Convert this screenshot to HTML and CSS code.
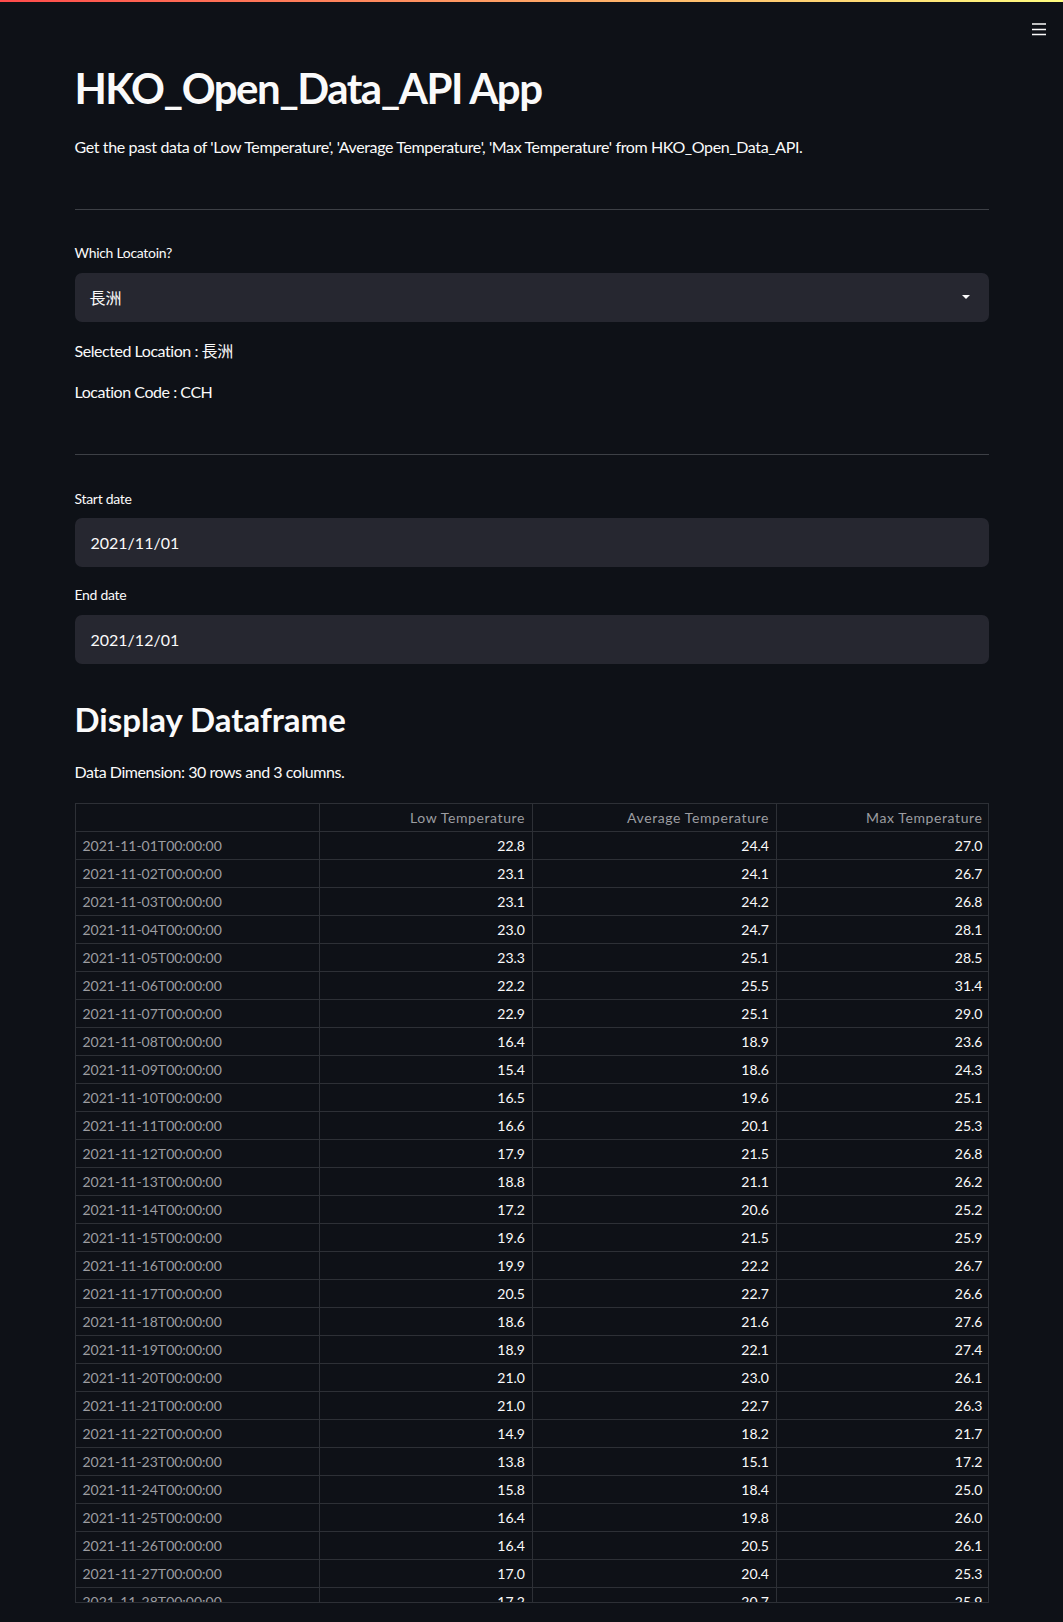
FILE: index.html
```html
<!DOCTYPE html>
<html lang="en">
<head>
<meta charset="utf-8">
<title>HKO_Open_Data_API App</title>
<link rel="stylesheet" href="styles.css">
</head>
<body>
<header class="app-header">
  <div class="decoration"></div>
  <button class="menu-btn" aria-label="menu">
    <svg width="14" height="14" viewBox="0 0 14 14"><path d="M0 2h14M0 7.5h14M0 12.5h14" stroke="#fafafa" stroke-width="1.6" fill="none"/></svg>
  </button>
</header>
<main class="main">
  <h1 class="title">HKO_Open_Data_API App</h1>
  <p class="intro">Get the past data of 'Low Temperature', 'Average Temperature', 'Max Temperature' from HKO_Open_Data_API.</p>
  <hr class="divider divider-1">
  <label class="label label-loc">Which Locatoin?</label>
  <div class="select">
    <span class="select-value">長洲</span>
    <svg class="caret" width="10" height="6" viewBox="0 0 10 6"><path d="M1 1h8L5 5z" fill="#fafafa"/></svg>
  </div>
  <p class="info info-sel">Selected Location : 長洲</p>
  <p class="info info-code">Location Code : CCH</p>
  <hr class="divider divider-2">
  <label class="label label-start">Start date</label>
  <div class="input">2021/11/01</div>
  <label class="label label-end">End date</label>
  <div class="input">2021/12/01</div>
  <h2 class="subtitle">Display Dataframe</h2>
  <p class="dim">Data Dimension: 30 rows and 3 columns.</p>
  <div class="grid-wrap">
    <table class="grid">
      <colgroup><col class="c-idx"><col class="c-a"><col class="c-b"><col class="c-c"></colgroup>
      <thead><tr><th></th><th>Low Temperature</th><th>Average Temperature</th><th>Max Temperature</th></tr></thead>
      <tbody>
        <tr><td>2021-11-01T00:00:00</td><td>22.8</td><td>24.4</td><td>27.0</td></tr>
        <tr><td>2021-11-02T00:00:00</td><td>23.1</td><td>24.1</td><td>26.7</td></tr>
        <tr><td>2021-11-03T00:00:00</td><td>23.1</td><td>24.2</td><td>26.8</td></tr>
        <tr><td>2021-11-04T00:00:00</td><td>23.0</td><td>24.7</td><td>28.1</td></tr>
        <tr><td>2021-11-05T00:00:00</td><td>23.3</td><td>25.1</td><td>28.5</td></tr>
        <tr><td>2021-11-06T00:00:00</td><td>22.2</td><td>25.5</td><td>31.4</td></tr>
        <tr><td>2021-11-07T00:00:00</td><td>22.9</td><td>25.1</td><td>29.0</td></tr>
        <tr><td>2021-11-08T00:00:00</td><td>16.4</td><td>18.9</td><td>23.6</td></tr>
        <tr><td>2021-11-09T00:00:00</td><td>15.4</td><td>18.6</td><td>24.3</td></tr>
        <tr><td>2021-11-10T00:00:00</td><td>16.5</td><td>19.6</td><td>25.1</td></tr>
        <tr><td>2021-11-11T00:00:00</td><td>16.6</td><td>20.1</td><td>25.3</td></tr>
        <tr><td>2021-11-12T00:00:00</td><td>17.9</td><td>21.5</td><td>26.8</td></tr>
        <tr><td>2021-11-13T00:00:00</td><td>18.8</td><td>21.1</td><td>26.2</td></tr>
        <tr><td>2021-11-14T00:00:00</td><td>17.2</td><td>20.6</td><td>25.2</td></tr>
        <tr><td>2021-11-15T00:00:00</td><td>19.6</td><td>21.5</td><td>25.9</td></tr>
        <tr><td>2021-11-16T00:00:00</td><td>19.9</td><td>22.2</td><td>26.7</td></tr>
        <tr><td>2021-11-17T00:00:00</td><td>20.5</td><td>22.7</td><td>26.6</td></tr>
        <tr><td>2021-11-18T00:00:00</td><td>18.6</td><td>21.6</td><td>27.6</td></tr>
        <tr><td>2021-11-19T00:00:00</td><td>18.9</td><td>22.1</td><td>27.4</td></tr>
        <tr><td>2021-11-20T00:00:00</td><td>21.0</td><td>23.0</td><td>26.1</td></tr>
        <tr><td>2021-11-21T00:00:00</td><td>21.0</td><td>22.7</td><td>26.3</td></tr>
        <tr><td>2021-11-22T00:00:00</td><td>14.9</td><td>18.2</td><td>21.7</td></tr>
        <tr><td>2021-11-23T00:00:00</td><td>13.8</td><td>15.1</td><td>17.2</td></tr>
        <tr><td>2021-11-24T00:00:00</td><td>15.8</td><td>18.4</td><td>25.0</td></tr>
        <tr><td>2021-11-25T00:00:00</td><td>16.4</td><td>19.8</td><td>26.0</td></tr>
        <tr><td>2021-11-26T00:00:00</td><td>16.4</td><td>20.5</td><td>26.1</td></tr>
        <tr><td>2021-11-27T00:00:00</td><td>17.0</td><td>20.4</td><td>25.3</td></tr>
        <tr><td>2021-11-28T00:00:00</td><td>17.2</td><td>20.7</td><td>25.9</td></tr>
      </tbody>
    </table>
  </div>
</main>
</body>
</html>
```

FILE: styles.css
```css
html, body {
  margin: 0;
  padding: 0;
  background: #0e1117;
  color: #fafafa;
  font-family: Lato, "Noto Sans CJK TC", sans-serif;
}

.app-header {
  position: fixed;
  top: 0;
  left: 0;
  right: 0;
  height: 46px;
  z-index: 10;
}

.decoration {
  height: 2px;
  background: linear-gradient(90deg, #ff4b4b, #fffd80);
}

.menu-btn {
  position: absolute;
  top: 22px;
  right: 17px;
  width: 14px;
  height: 14px;
  padding: 0;
  border: 0;
  background: none;
  display: block;
}

.menu-btn svg { display: block; }

.main {
  width: 914px;
  margin: 0 auto;
  padding-top: 62px;
  display: flex;
  flex-direction: column;
}

.title {
  margin: 0;
  font-size: 42px;
  line-height: 52.8px;
  font-weight: 700;
  letter-spacing: -1.5px;
}

.intro {
  margin: 19px 0 0;
  font-size: 16px;
  line-height: 25.6px;
  letter-spacing: -0.37px;
}

.divider {
  width: 100%;
  height: 1px;
  margin: 0;
  border: 0;
  background: #3d4046;
}

.divider-1 { margin-top: 50px; }
.divider-2 { margin-top: 49px; }

.label {
  display: block;
  font-size: 14px;
  line-height: 22.4px;
  letter-spacing: -0.3px;
}

.label-loc { margin-top: 32px; }
.label-start { margin-top: 33px; }
.label-end { margin-top: 17px; }

.select, .input {
  height: 49px;
  box-sizing: border-box;
  background: #262730;
  border-radius: 7px;
  display: flex;
  align-items: center;
  font-size: 16px;
  margin-top: 8px;
}

.select {
  padding: 0 18px 0 15px;
  justify-content: space-between;
  margin-top: 8px;
}

.input { padding-left: 16px; }

.caret { display: block; }

.info {
  margin: 0;
  font-size: 16px;
  line-height: 25.6px;
  letter-spacing: -0.45px;
}

.info-sel { margin-top: 16px; }
.info-code { margin-top: 16px; }

.subtitle {
  margin: 34px 0 0;
  font-size: 33px;
  line-height: 43.2px;
  font-weight: 700;
}

.dim {
  margin: 18px 0 0;
  font-size: 16px;
  line-height: 25.6px;
  letter-spacing: -0.45px;
}

.grid-wrap {
  margin-top: 18px;
  height: 800px;
  box-sizing: border-box;
  border: 1px solid #2d3036;
  overflow: hidden;
}

.grid {
  width: 100%;
  border-collapse: collapse;
  table-layout: fixed;
  font-size: 14px;
}

.c-idx { width: 244px; }
.c-a { width: 213px; }
.c-b { width: 244px; }
.c-c { width: 213px; }

.grid th, .grid td {
  height: 28px;
  box-sizing: border-box;
  padding: 0 7px;
  border: 1px solid #2d3036;
  text-align: right;
  white-space: nowrap;
  font-weight: 400;
}

.grid tr:first-child th { border-top: 0; }
.grid th:first-child, .grid td:first-child { border-left: 0; text-align: left; }
.grid th:last-child, .grid td:last-child { border-right: 0; }

.grid th { color: #9c9da1; letter-spacing: 0.6px; }
.grid td { color: #fafafa; }
.grid td:first-child { color: #9c9da1; }
```
